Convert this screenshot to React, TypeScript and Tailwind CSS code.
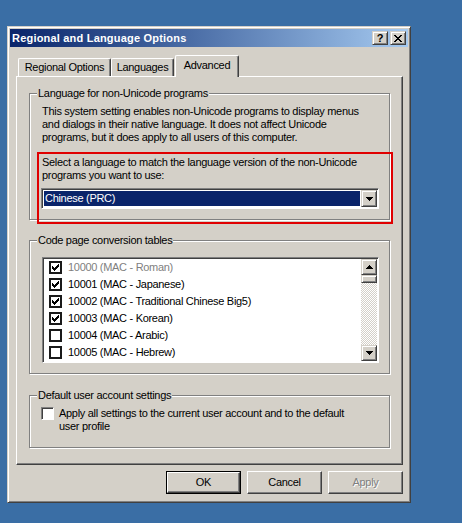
import { clsx } from 'clsx'
import type { ReactNode } from 'react'

// Win2k "classic" bevels: one border for the outer edge pair, an inset shadow for the inner one.
const raisedClass = 'border border-t-white border-l-white border-r-[#404040] border-b-[#404040] shadow-[inset_-1px_-1px_#808080]'
const sunkenClass = 'border border-t-[#808080] border-l-[#808080] border-r-white border-b-white shadow-[inset_1px_1px_#404040]'
// Scroll / caption / combo buttons use the lighter outer edge.
const smallButtonClass = 'flex items-center justify-center bg-[#d4d0c8] border border-t-[#d4d0c8] border-l-[#d4d0c8] border-r-[#404040] border-b-[#404040] '
	+ 'shadow-[inset_1px_1px_white,inset_-1px_-1px_#808080]'

const codePages = [
	{ label: '10000 (MAC - Roman)', checked: true, disabled: true },
	{ label: '10001 (MAC - Japanese)', checked: true },
	{ label: '10002 (MAC - Traditional Chinese Big5)', checked: true },
	{ label: '10003 (MAC - Korean)', checked: true },
	{ label: '10004 (MAC - Arabic)', checked: false },
	{ label: '10005 (MAC - Hebrew)', checked: false },
]

function CheckMark() {
	return (
		<svg width="7" height="7" viewBox="0 0 7 7" shapeRendering="crispEdges" className="block">
			<path d="M0 2h1v3H0zM1 3h1v3H1zM2 4h1v3H2zM3 3h1v3H3zM4 2h1v3H4zM5 1h1v3H5zM6 0h1v3H6z" fill="black" />
		</svg>
	)
}

function Arrow({ up }: { up?: boolean }) {
	return (
		<svg width="7" height="4" viewBox="0 0 7 4" shapeRendering="crispEdges" className="block">
			<path d={up ? 'M3 0h1v1H3zM2 1h3v1H2zM1 2h5v1H1zM0 3h7v1H0z' : 'M0 0h7v1H0zM1 1h5v1H1zM2 2h3v1H2zM3 3h1v1H3z'} fill="black" />
		</svg>
	)
}

function GroupBox({ label, className, children }: { label: string, className?: string, children: ReactNode }) {
	return (
		<div className={clsx('relative border border-[#808080] shadow-[1px_1px_white,inset_1px_1px_white]', className)}>
			<span className="absolute -top-[7px] left-[7px] bg-[#d4d0c8] px-[1px] leading-[13px]">{label}</span>
			{children}
		</div>
	)
}

function Tab({ label, active, className }: { label: string, active?: boolean, className?: string }) {
	return (
		<div
			className={clsx(
				'flex items-center justify-center rounded-t-[2px] border-t border-l border-r border-t-white border-l-white border-r-[#404040] bg-[#d4d0c8] shadow-[inset_-1px_0_#808080]',
				active ? 'relative z-10 -mb-px h-[22px] pb-[3px]' : 'h-[18px]',
				className,
			)}
		>
			{label}
		</div>
	)
}

function PushButton({ label, isDefault, disabled }: { label: string, isDefault?: boolean, disabled?: boolean }) {
	const face = (
		<div className={clsx(raisedClass, 'flex h-full w-full items-center justify-center bg-[#d4d0c8]', disabled && 'text-[#808080] [text-shadow:1px_1px_0_white]')}>
			{label}
		</div>
	)
	return (
		<div className={clsx('h-[23px] w-[75px]', isDefault && 'border border-black')}>
			{face}
		</div>
	)
}

export default function App() {
	return (
		<div className="min-h-screen bg-[#3a6ea5] pt-[26px] pl-[7px] font-['Liberation_Sans',Arial,sans-serif] text-[11px] leading-[13px] tracking-[-0.3px] text-black">
			<div className="relative w-[404px] border border-t-[#d4d0c8] border-l-[#d4d0c8] border-r-[#404040] border-b-[#404040] bg-[#d4d0c8] p-[2px] shadow-[inset_1px_1px_white,inset_-1px_-1px_#808080]">
				{/* Caption */}
				<div className="flex h-[18px] items-center bg-gradient-to-r from-[#0a246a] to-[#a6caf0] pl-[2px] pr-[2px]">
					<span className="flex-1 font-bold tracking-[0.2px] text-white">Regional and Language Options</span>
					<div className={clsx(smallButtonClass, 'h-[14px] w-[16px] text-[11px] font-bold')}>?</div>
					<div className={clsx(smallButtonClass, 'ml-[2px] h-[14px] w-[16px]')}>
						<svg width="8" height="7" viewBox="0 0 8 7" shapeRendering="crispEdges" className="block">
							<path d="M0 0h2v1H0zM6 0h2v1H6zM1 1h2v1H1zM5 1h2v1H5zM2 2h4v1H2zM3 3h2v1H3zM2 4h4v1H2zM1 5h2v1H1zM5 5h2v1H5zM0 6h2v1H0zM6 6h2v1H6z" fill="black" />
						</svg>
					</div>
				</div>

				<div className="mt-[8px] ml-[6px] mr-[5px]">
					<div className="flex h-[21px] items-end pl-[2px]">
						<Tab label="Regional Options" className="w-[93px]" />
						<Tab label="Languages" className="w-[63px]" />
						<Tab label="Advanced" active className="ml-[1px] w-[64px]" />
					</div>

					<div className={clsx(raisedClass, 'bg-[#d4d0c8] px-[12px] pt-[16px] pb-[16px]')}>
						<GroupBox label="Language for non-Unicode programs" className="pt-[11px] pb-[10px] pl-[11px]">
							<p className="pl-px">
								This system setting enables non-Unicode programs to display menus<br />
								and dialogs in their native language. It does not affect Unicode<br />
								programs, but it does apply to all users of this computer.
							</p>
							<p className="mt-[12px] pl-px">
								Select a language to match the language version of the non-Unicode<br />
								programs you want to use:
							</p>
							<div className={clsx(sunkenClass, 'mt-[6px] flex h-[21px] w-[338px] bg-white p-[1px]')}>
								<div className="flex-1 p-[1px]">
									<div className="flex h-full items-center bg-[#0a246a] px-[1px] text-white">Chinese (PRC)</div>
								</div>
								<div className={clsx(smallButtonClass, 'h-full w-[16px]')}><Arrow /></div>
							</div>
						</GroupBox>

						<GroupBox label="Code page conversion tables" className="mt-[20px] pt-[16px] pb-[10px] pl-[11px]">
							<div className={clsx(sunkenClass, 'ml-[1px] flex h-[106px] w-[337px] bg-white p-[1px]')}>
								<ul className="flex-1">
									{codePages.map((page) => (
										<li key={page.label} className="flex h-[17px] items-center gap-[6px] pl-[5px]">
											<span className="flex size-[13px] shrink-0 items-center justify-center border-2 border-[#1a1a1a] bg-white">
												{page.checked && <CheckMark />}
											</span>
											<span className={clsx(page.disabled && 'text-[#808080]')}>{page.label}</span>
										</li>
									))}
								</ul>
								<div className="flex w-[16px] flex-col">
									<div className={clsx(smallButtonClass, 'h-[16px]')}><Arrow up /></div>
									<div className={clsx(smallButtonClass, 'h-[8px]')} />
									<div className="flex-1 bg-[repeating-conic-gradient(#d4d0c8_0%_25%,#ffffff_0%_50%)] bg-[length:2px_2px]" />
									<div className={clsx(smallButtonClass, 'h-[16px]')}><Arrow /></div>
								</div>
							</div>
						</GroupBox>

						<GroupBox label="Default user account settings" className="mt-[21px] pt-[11px] pb-[14px] pl-[11px]">
							<div className="flex items-start gap-[5px]">
								<span className={clsx(sunkenClass, 'size-[13px] shrink-0 bg-white')} />
								<p>
									Apply all settings to the current user account and to the default<br />
									user profile
								</p>
							</div>
						</GroupBox>
					</div>

					<div className="mt-[6px] mb-[6px] flex justify-end gap-[6px]">
						<PushButton label="OK" isDefault />
						<PushButton label="Cancel" />
						<PushButton label="Apply" disabled />
					</div>
				</div>

				{/* Red highlight drawn over the screenshot */}
				<div className="pointer-events-none absolute left-[29px] top-[125px] h-[72px] w-[356px] border-2 border-[#e00000]" />
			</div>
		</div>
	)
}
